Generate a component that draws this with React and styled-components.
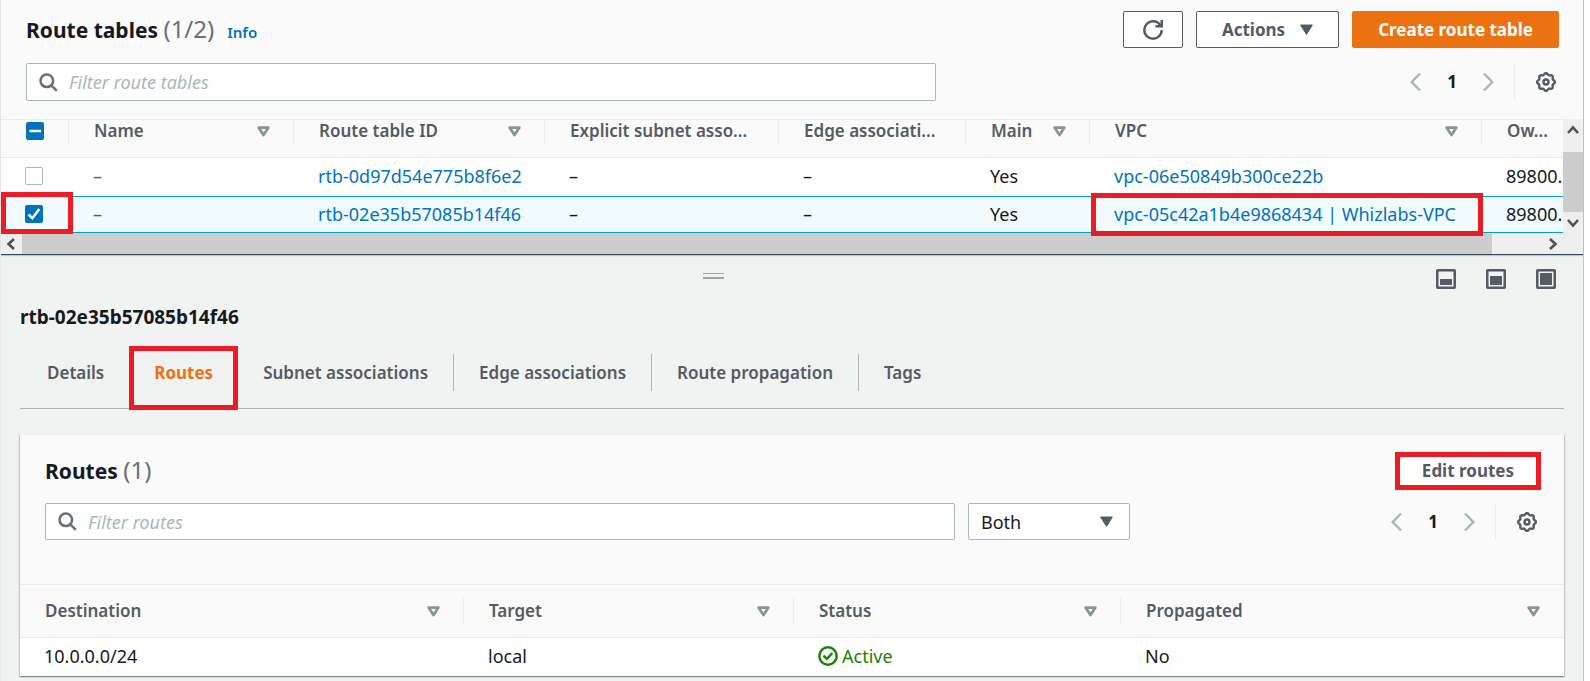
import React, { useEffect, useRef } from "react";
import styled, { createGlobalStyle, css } from "styled-components";

const c = {
  text: "#16191f",
  muted: "#545b64",
  count: "#687078",
  link: "#0073bb",
  border: "#aab7b8",
  line: "#eaeded",
  head: "#fafafa",
  canvas: "#f1f3f3",
  orange: "#ec7211",
  select: "#00a1c9",
  green: "#1d8102",
  mark: "#ed1c24",
};

const GlobalStyle = createGlobalStyle`
  *, *::before, *::after { box-sizing: border-box; }
  body {
    margin: 0;
    background: #fff;
    color: ${c.text};
    font-family: "Noto Sans", "Open Sans", sans-serif;
    font-size: 18px;
    line-height: 24px;
  }
  button, input, select { font: inherit; color: inherit; }
  h2, h3 { margin: 0; }
  svg { display: block; flex: none; }
  a { color: ${c.link}; text-decoration: none; }
`;

/* ---------- shell ---------- */

const Page = styled.div`
  display: flex;
  flex-direction: column;
  min-height: 100vh;
  margin-right: 6px;
  border-left: 1px solid ${c.line};
  border-right: 1px solid #c0c7c8;
  background: ${c.canvas};
`;

const TopPane = styled.section`
  background: ${c.head};
  border-bottom: 1px solid #37475a;
  box-shadow: 0 1px 1px rgba(0, 28, 36, 0.2);
`;

const TopHeader = styled.header`
  display: flex;
  flex-direction: column;
  gap: 15px;
  padding: 11px 24px 18px 25px;
`;

const Bar = styled.div`
  display: flex;
  align-items: center;
  justify-content: space-between;
  gap: 24px;
`;

const Group = styled.div`
  display: flex;
  align-items: center;
  flex: ${(p) => (p.$grow ? "1" : "none")};
  gap: 13px;
`;

const Heading = styled.h2`
  font-size: 21px;
  line-height: 28px;
  font-weight: 700;
`;

const Count = styled.span`
  font-size: 24px;
  font-weight: 400;
  color: ${c.count};
`;

const InfoLink = styled.a`
  padding-top: 4px;
  font-size: 15px;
  font-weight: 600;
`;

const Button = styled.button`
  display: inline-flex;
  align-items: center;
  justify-content: center;
  gap: 15px;
  position: relative;
  height: 37px;
  padding: 0 ${(p) => (p.$icon ? "19px" : "25px")};
  border: 1px solid ${(p) => (p.$primary ? c.orange : c.muted)};
  border-radius: 2px;
  background: ${(p) => (p.$primary ? c.orange : "#fff")};
  color: ${(p) => (p.$primary ? "#fff" : c.muted)};
  font-size: 17px;
  font-weight: 700;
  white-space: nowrap;
`;

const IconButton = styled.button`
  display: flex;
  align-items: center;
  padding: 0;
  border: 0;
  background: none;
  color: ${(p) => (p.$faint ? c.border : c.muted)};
`;

const Pager = styled.nav`
  display: flex;
  align-items: center;
  color: ${c.text};
`;

const PageNumber = styled.button`
  width: 62px;
  padding: 0;
  border: 0;
  background: none;
  font-size: 17px;
  font-weight: 700;
`;

const Divider = styled.span`
  width: 1px;
  height: 37px;
  margin: 0 21px 0 20px;
  background: ${c.line};
`;

const PagerRow = styled.div`
  display: flex;
  align-items: center;
  padding-right: 3px;
`;

const SearchField = styled.label`
  display: grid;
  flex: 1;
  max-width: 910px;
  align-items: center;
  svg { grid-area: 1 / 1; margin-left: 13px; color: ${c.count}; z-index: 1; }
  input {
    grid-area: 1 / 1;
    width: 100%;
    height: ${(p) => (p.$tall ? "38px" : "37px")};
    padding: 0 12px 0 42px;
    border: 1px solid ${c.border};
    border-radius: 2px;
    background: #fff;
    outline: 0;
  }
  input::placeholder { color: ${c.border}; font-style: italic; opacity: 1; }
`;

const SelectField = styled.label`
  display: grid;
  width: 162px;
  align-items: center;
  svg { grid-area: 1 / 1; justify-self: end; margin-right: 17px; color: ${c.muted}; pointer-events: none; }
  select {
    grid-area: 1 / 1;
    width: 100%;
    height: 37px;
    padding: 0 12px;
    appearance: none;
    border: 1px solid ${c.border};
    border-radius: 2px;
    background: #fff;
  }
`;

/* ---------- tables ---------- */

const DataTable = styled.table`
  width: 100%;
  table-layout: fixed;
  border-collapse: separate;
  border-spacing: 0;
  background: #fff;
`;

const Col = styled.col`
  width: ${(p) => (p.$w ? p.$w + "px" : "auto")};
`;

const HeadCell = styled.th`
  height: ${(p) => (p.$tall ? "54px" : "39px")};
  padding: 0;
  vertical-align: top;
  text-align: left;
  background: ${c.head};
  border-top: 1px solid ${c.line};
  border-bottom: 1px solid ${c.line};
  color: ${c.muted};
  font-size: 17px;
  font-weight: 600;
  white-space: nowrap;
  overflow: hidden;
`;

const HeadInner = styled.div`
  display: flex;
  align-items: center;
  justify-content: space-between;
  height: ${(p) => (p.$tall ? "26px" : "24px")};
  margin-top: ${(p) => (p.$tall ? "13px" : "0")};
  padding: 0 23px ${(p) => (p.$tall ? "0" : "2px")} 25px;
  border-right: 1px solid ${(p) => (p.$last ? "transparent" : c.line)};
  color: ${c.muted};
  svg { color: #879596; }
`;

const Cell = styled.td`
  position: relative;
  height: ${(p) => (p.$selected ? "37px" : "38px")};
  padding: 0 0 2px 24px;
  white-space: nowrap;
  color: ${(p) => (p.$dim ? c.muted : c.text)};
  ${(p) =>
    p.$selected &&
    css`
      background: #f1faff;
      border-top: 1px solid ${c.select};
      border-bottom: 1px solid ${c.select};
    `}
`;

const CheckWrap = styled.span`
  display: grid;
  place-items: center;
  width: 18px;
  input {
    grid-area: 1 / 1;
    width: 18px;
    height: 18px;
    margin: 0;
    appearance: none;
    border: 1px solid ${(p) => (p.$on ? c.link : c.border)};
    border-radius: 2px;
    background: ${(p) => (p.$on ? c.link : "#fff")};
  }
  && svg { grid-area: 1 / 1; pointer-events: none; color: #fff; z-index: 1; }
`;

const Mark = styled.span`
  position: absolute;
  z-index: 2;
  inset: ${(p) => p.$inset};
  border: 5px solid ${c.mark};
  pointer-events: none;
`;

const Scroller = styled.div`
  display: flex;
  align-items: stretch;
`;

const ScrollBody = styled.div`
  flex: 1;
  min-width: 0;
`;

const VBar = styled.div`
  display: flex;
  flex-direction: column;
  align-items: center;
  width: 20px;
  padding: 6px 0 5px;
  background: #efefef;
  color: #505050;
  svg:last-child { margin-top: auto; }
`;

const VThumb = styled.span`
  width: 20px;
  height: 60px;
  margin-top: 17px;
  background: #cdcdcd;
`;

const HBar = styled.div`
  display: flex;
  align-items: center;
  height: 21px;
  padding: 0 25px 0 5px;
  background: #efefef;
  color: #505050;
`;

const HThumb = styled.span`
  flex: 1;
  height: 21px;
  margin: 0 57px 0 7px;
  background: #cdcdcd;
`;

/* ---------- detail pane ---------- */

const SplitBar = styled.div`
  display: flex;
  gap: 10px;
  padding: 14px 27px 0 0;
`;

const Handle = styled.div`
  display: flex;
  flex: 1;
  justify-content: center;
  padding-top: 4px;
  span { width: 21px; height: 6px; border: solid #a0a4a4; border-width: 1px 0 2px; }
`;

const SizeButtons = styled.div`
  display: flex;
  gap: 30px;
`;

const Detail = styled.section`
  padding: 0 19px 3px;
`;

const ResourceName = styled.h2`
  padding-top: 14px;
  font-size: 19px;
  line-height: 28px;
  font-weight: 700;
`;

const Tabs = styled.div`
  display: flex;
  padding: 23px 0 17px 2px;
  border-bottom: 1px solid ${c.border};
`;

const Tab = styled.button`
  position: relative;
  height: 37px;
  padding: 0 25px;
  border: solid ${c.border};
  border-width: 0 ${(p) => (p.$divided ? "1px" : "0")} 0 0;
  background: none;
  color: ${(p) => (p.$active ? c.orange : c.muted)};
  font-size: 17px;
  font-weight: ${(p) => (p.$active ? 700 : 600)};
  white-space: nowrap;
`;

const Panel = styled.section`
  margin-top: 25px;
  border-top: 1px solid ${c.line};
  background: ${c.head};
  box-shadow: 0 1px 1px rgba(0, 28, 36, 0.3), 1px 1px 1px rgba(0, 28, 36, 0.15),
    -1px 1px 1px rgba(0, 28, 36, 0.15);
`;

const PanelHeader = styled.header`
  display: flex;
  flex-direction: column;
  gap: 14px;
  padding: 17px 24px 44px 25px;
`;

const Status = styled.span`
  display: flex;
  align-items: center;
  gap: 4px;
  color: ${c.green};
`;

/* ---------- icons ---------- */

const gearPath =
  Array.from({ length: 96 }, (_, i) => {
    const a = (i / 96) * Math.PI * 2;
    const r = 8.1 + 0.8 * Math.cos(8 * a);
    return `${i ? "L" : "M"}${(10 + r * Math.cos(a)).toFixed(2)} ${(10 + r * Math.sin(a)).toFixed(2)}`;
  }).join("") + "Z";

const GearIcon = () => (
  <svg width="20" height="20" viewBox="0 0 20 20" fill="none" stroke="currentColor" strokeWidth="2.4" strokeLinejoin="round">
    <path d={gearPath} />
    <circle cx="10" cy="10" r="2.5" />
  </svg>
);

const SearchIcon = () => (
  <svg width="19" height="19" viewBox="0 0 19 19" fill="none" stroke="currentColor" strokeWidth="2.5">
    <circle cx="7.8" cy="7.8" r="6.3" />
    <path d="M12.3 12.3 17.8 17.8" />
  </svg>
);

const RefreshIcon = () => (
  <svg width="20" height="20" viewBox="0 0 16 16" fill="none" stroke="currentColor" strokeWidth="2">
    <path d="M15 8c0 3.87-3.13 7-7 7s-7-3.13-7-7 3.13-7 7-7c2.79 0 5.2 1.63 6.33 4" />
    <path d="M10 5h5V0" />
  </svg>
);

const Caret = () => (
  <svg width="13" height="11" viewBox="0 0 13 11" fill="currentColor" stroke="currentColor" strokeLinejoin="round">
    <path d="M.6 1h11.800L6.500 10.400z" />
  </svg>
);

const SortIcon = () => (
  <svg width="13" height="11" viewBox="0 0 13 11" fill="none" stroke="currentColor" strokeWidth="2.700" strokeLinejoin="round">
    <path d="M1.700 1.700h9.600L6.500 9z" />
  </svg>
);

const Chevron = ({ right }) => (
  <svg width="11" height="20" viewBox="0 0 11 20" fill="none" stroke="currentColor" strokeWidth="2.500">
    <path d={right ? "M1 1.500 9.300 10 1 18.500" : "M10 1.500 1.700 10 10 18.500"} />
  </svg>
);

const arrows = {
  up: ["M1 8 6 2.500 11 8", 12, 10],
  down: ["M1 2 6 7.500 11 2", 12, 10],
  left: ["M8 1 2.500 6 8 11", 9, 12],
  right: ["M1 1 6.500 6 1 11", 9, 12],
};
const Arrow = ({ dir }) => {
  const [d, w, h] = arrows[dir];
  return (
    <svg width={w} height={h} viewBox={`0 0 ${w} ${h}`} fill="none" stroke="currentColor" strokeWidth="2.600">
      <path d={d} />
    </svg>
  );
};

const PaneIcon = ({ fill }) => (
  <svg width="20" height="20" viewBox="0 0 20 20">
    <rect x="1.250" y="1.250" width="17.500" height="17.500" rx="0.500" fill="none" stroke="#545b64" strokeWidth="2.500" />
    <rect x="4" y={16 - fill} width="12" height={fill} rx="0.500" fill="#545b64" />
  </svg>
);

const ActiveIcon = () => (
  <svg width="20" height="20" viewBox="0 0 20 20" fill="none" stroke="currentColor" strokeWidth="2.400">
    <circle cx="10" cy="10" r="8.700" />
    <path d="M5.500 9.700 8.900 12.800 14.300 7.200" />
  </svg>
);

const TickIcon = () => (
  <svg width="18" height="18" viewBox="0 0 18 18" fill="none" stroke="currentColor" strokeWidth="2.500">
    <path d="M3.500 9.500 7.400 13.200 14.300 4" />
  </svg>
);

const DashIcon = () => (
  <svg width="18" height="18" viewBox="0 0 18 18" fill="none" stroke="currentColor" strokeWidth="2.500">
    <path d="M3.500 9h11.500" />
  </svg>
);

/* ---------- parts ---------- */

const Check = ({ label, on, mixed }) => {
  const ref = useRef(null);
  useEffect(() => {
    ref.current.indeterminate = Boolean(mixed);
  }, [mixed]);
  return (
    <CheckWrap $on={on || mixed}>
      <input ref={ref} type="checkbox" aria-label={label} defaultChecked={on} />
      {mixed ? <DashIcon /> : on ? <TickIcon /> : null}
    </CheckWrap>
  );
};

const Head = ({ children, sort, last, tall }) => (
  <HeadCell $tall={tall} scope="col">
    <HeadInner $last={last} $tall={tall}>
      {children}
      {sort && <SortIcon />}
    </HeadInner>
  </HeadCell>
);

const Search = ({ label, tall }) => (
  <SearchField $tall={tall}>
    <SearchIcon />
    <input type="text" placeholder={label} aria-label={label} />
  </SearchField>
);

const Pagination = () => (
  <PagerRow>
    <Pager aria-label="Pages">
      <IconButton $faint aria-label="Previous page"><Chevron /></IconButton>
      <PageNumber>1</PageNumber>
      <IconButton $faint aria-label="Next page"><Chevron right /></IconButton>
    </Pager>
    <Divider />
    <IconButton aria-label="Preferences"><GearIcon /></IconButton>
  </PagerRow>
);

const tables = [
  { id: "rtb-0d97d54e775b8f6e2", vpc: "vpc-06e50849b300ce22b" },
  { id: "rtb-02e35b57085b14f46", vpc: "vpc-05c42a1b4e9868434 | Whizlabs-VPC", selected: true },
];

const tabs = [
  { label: "Details" },
  { label: "Routes", active: true },
  { label: "Subnet associations", divided: true },
  { label: "Edge associations", divided: true },
  { label: "Route propagation", divided: true },
  { label: "Tags" },
];

export default function App() {
  return (
    <Page>
      <GlobalStyle />
      <TopPane>
        <TopHeader>
          <Bar>
            <Group>
              <Heading>Route tables <Count>(1/2)</Count></Heading>
              <InfoLink href="#info">Info</InfoLink>
            </Group>
            <Group>
              <Button $icon aria-label="Refresh"><RefreshIcon /></Button>
              <Button>Actions <Caret /></Button>
              <Button $primary>Create route table</Button>
            </Group>
          </Bar>
          <Bar>
            <Search label="Filter route tables" tall />
            <Pagination />
          </Bar>
        </TopHeader>
        <Scroller>
          <ScrollBody>
            <DataTable>
              <colgroup>
                <Col $w={68} /><Col $w={225} /><Col $w={251} /><Col $w={234} />
                <Col $w={187} /><Col $w={124} /><Col $w={392} /><Col />
              </colgroup>
              <thead>
                <tr>
                  <Head><Check label="Select all" mixed /></Head>
                  <Head sort>Name</Head>
                  <Head sort>Route table ID</Head>
                  <Head>Explicit subnet asso...</Head>
                  <Head>Edge associati...</Head>
                  <Head sort>Main</Head>
                  <Head sort>VPC</Head>
                  <Head last>Ow...</Head>
                </tr>
              </thead>
              <tbody>
                {tables.map(({ id, vpc, selected }) => (
                  <tr key={id}>
                    <Cell $selected={selected}>
                      <Check label={`Select ${id}`} on={selected} />
                      {selected && <Mark $inset="-5px -4px -2px 0" />}
                    </Cell>
                    <Cell $selected={selected} $dim>–</Cell>
                    <Cell $selected={selected}><a href={`#${id}`}>{id}</a></Cell>
                    <Cell $selected={selected}>–</Cell>
                    <Cell $selected={selected}>–</Cell>
                    <Cell $selected={selected}>Yes</Cell>
                    <Cell $selected={selected}>
                      <a href={`#${vpc.slice(0, 21)}`}>{vpc}</a>
                      {selected && <Mark $inset="-4px -1px -4px 1px" />}
                    </Cell>
                    <Cell $selected={selected}>89800.</Cell>
                  </tr>
                ))}
              </tbody>
            </DataTable>
          </ScrollBody>
          <VBar>
            <Arrow dir="up" />
            <VThumb />
            <Arrow dir="down" />
          </VBar>
        </Scroller>
        <HBar>
          <Arrow dir="left" />
          <HThumb />
          <Arrow dir="right" />
        </HBar>
      </TopPane>

      <SplitBar>
        <Handle><span /></Handle>
        <SizeButtons>
          <IconButton aria-label="Small panel"><PaneIcon fill={6} /></IconButton>
          <IconButton aria-label="Half panel"><PaneIcon fill={9} /></IconButton>
          <IconButton aria-label="Full panel"><PaneIcon fill={12} /></IconButton>
        </SizeButtons>
      </SplitBar>

      <Detail>
        <ResourceName>rtb-02e35b57085b14f46</ResourceName>
        <Tabs role="tablist">
          {tabs.map((t) => (
            <Tab key={t.label} role="tab" aria-selected={Boolean(t.active)} $active={t.active} $divided={t.divided}>
              {t.label}
              {t.active && <Mark $inset="-8px 0 -19px 0" />}
            </Tab>
          ))}
        </Tabs>
        <Panel>
          <PanelHeader>
            <Bar>
              <Heading as="h3">Routes <Count>(1)</Count></Heading>
              <Button>
                Edit routes
                <Mark $inset="-1px -2px -2px -2px" />
              </Button>
            </Bar>
            <Bar>
              <Group $grow>
                <Search label="Filter routes" />
                <SelectField>
                  <select aria-label="Propagation filter" defaultValue="Both">
                    <option>Both</option>
                  </select>
                  <Caret />
                </SelectField>
              </Group>
              <Pagination />
            </Bar>
          </PanelHeader>
          <DataTable>
            <colgroup>
              <Col $w={444} /><Col $w={330} /><Col $w={327} /><Col />
            </colgroup>
            <thead>
              <tr>
                <Head tall sort>Destination</Head>
                <Head tall sort>Target</Head>
                <Head tall sort>Status</Head>
                <Head tall sort last>Propagated</Head>
              </tr>
            </thead>
            <tbody>
              <tr>
                <Cell>10.0.0.0/24</Cell>
                <Cell>local</Cell>
                <Cell><Status><ActiveIcon />Active</Status></Cell>
                <Cell>No</Cell>
              </tr>
            </tbody>
          </DataTable>
        </Panel>
      </Detail>
    </Page>
  );
}
